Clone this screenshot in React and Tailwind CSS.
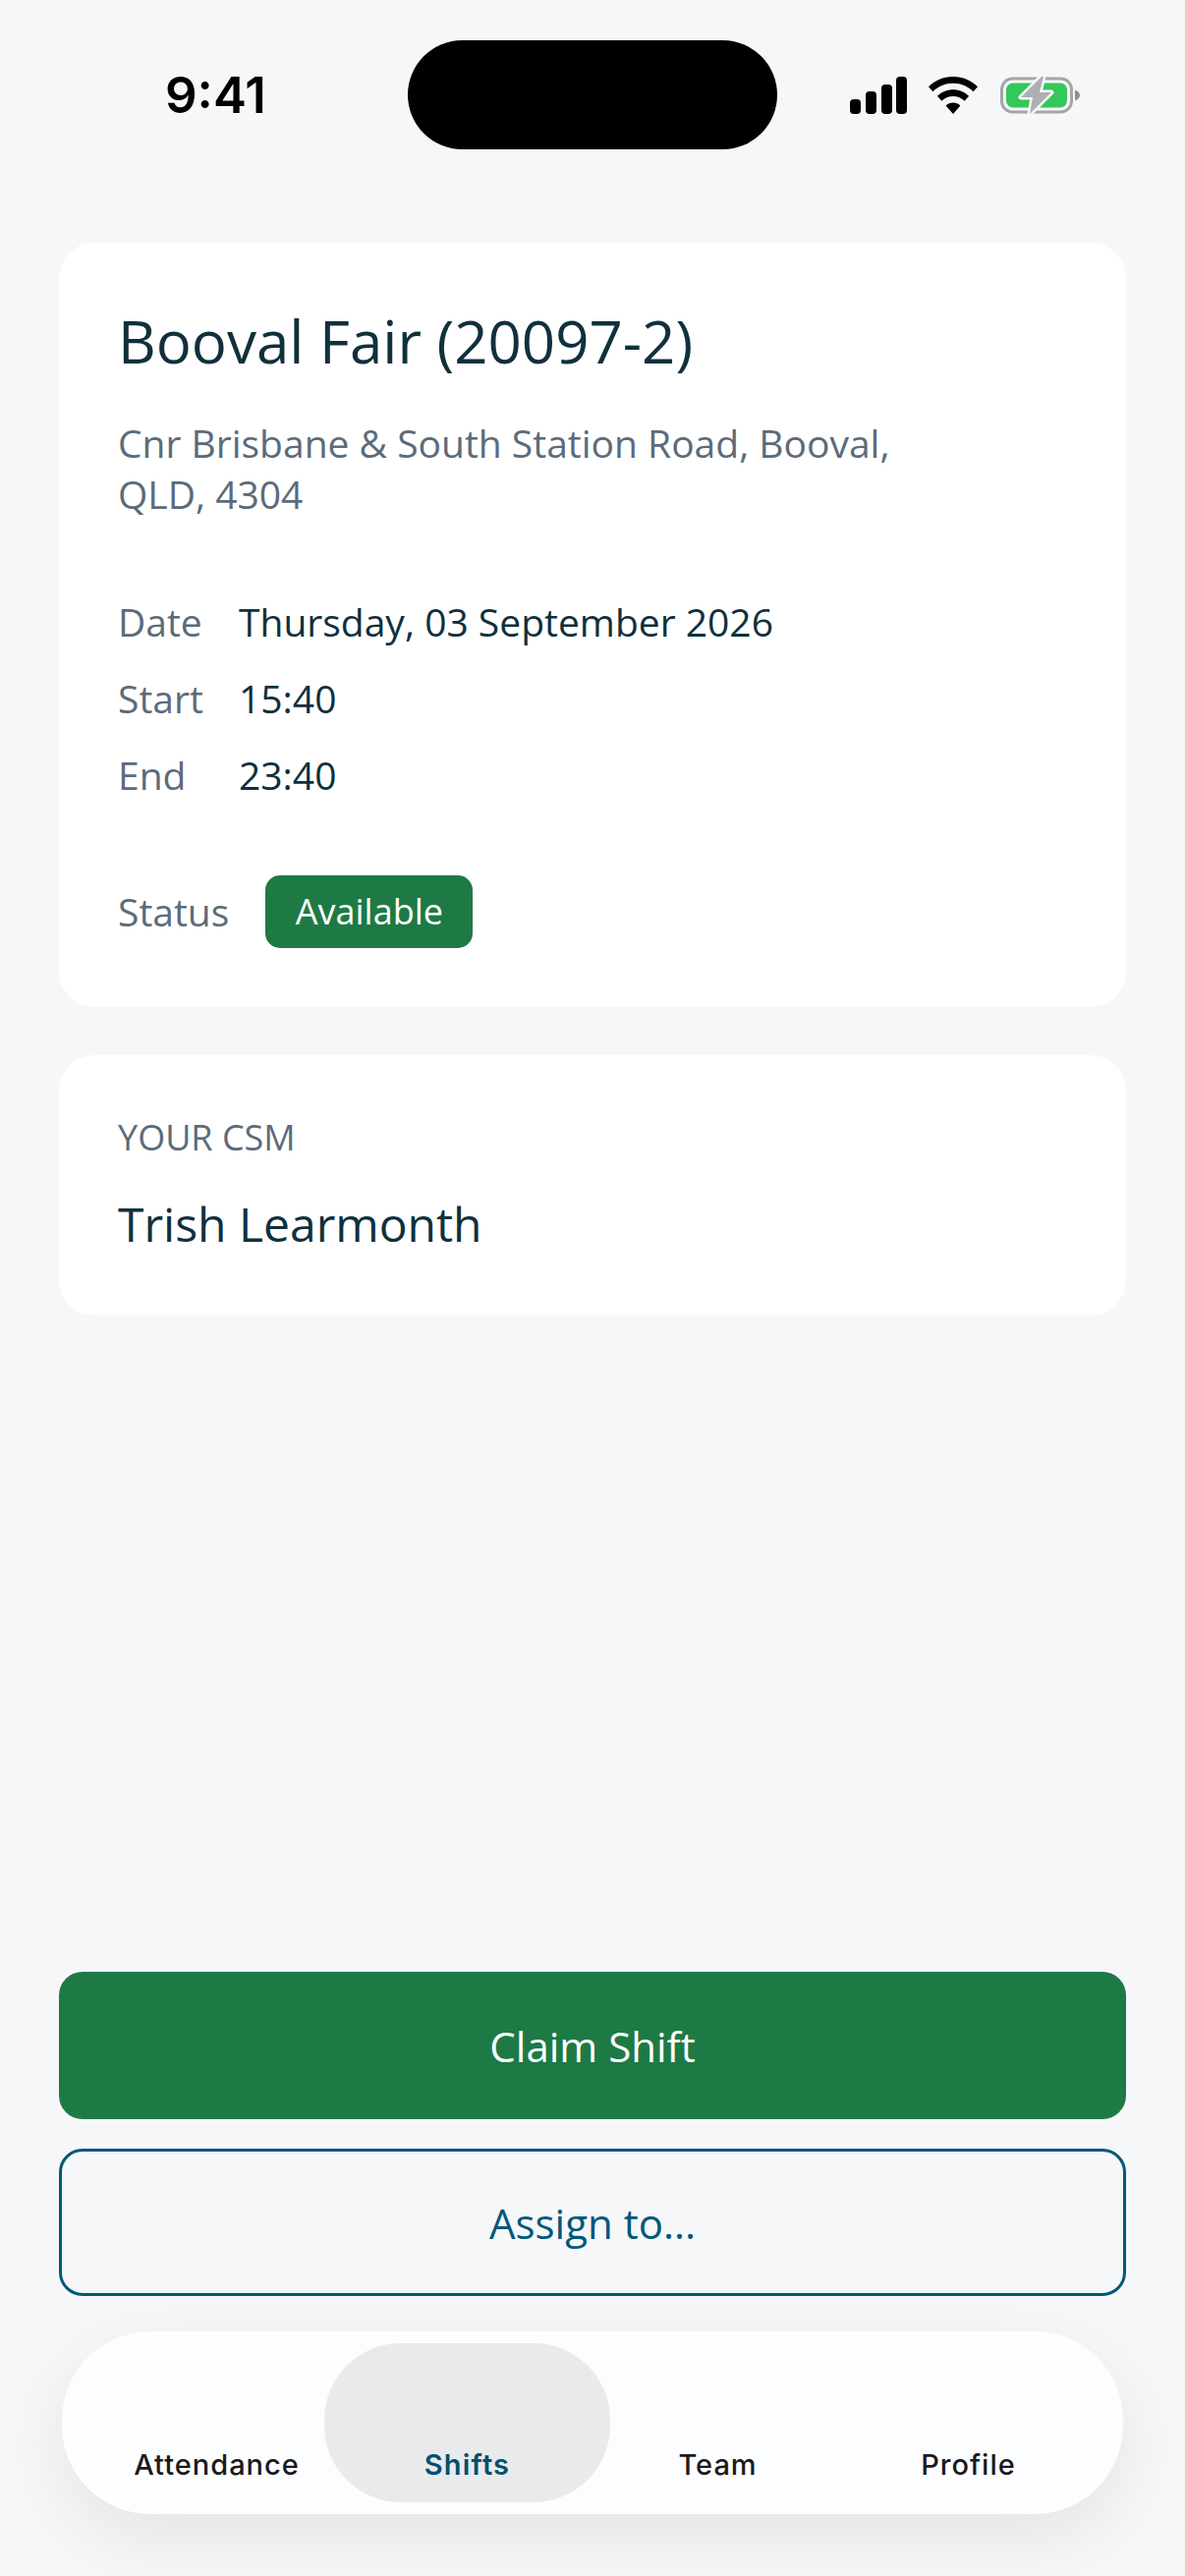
import React from "react";

const openSans = { fontFamily: '"Open Sans", sans-serif' };

function StatusIcons() {
  return (
    <div className="flex items-center">
      <svg width="58" height="38" viewBox="0 0 58 38" fill="#000">
        <rect x="0" y="23" width="11" height="15" rx="4" />
        <rect x="16" y="15" width="11" height="23" rx="4" />
        <rect x="32" y="8" width="11" height="30" rx="4" />
        <rect x="47" y="0" width="11" height="38" rx="4" />
      </svg>
      <svg className="ml-[22px]" width="50" height="38" viewBox="0 0 50 38" fill="#000">
        <path d="M25 0C34.8 0 43.6 3.9 50 10.3L45.6 15.2C40.2 9.9 33 6.7 25 6.7S9.8 9.9 4.4 15.2L0 10.3C6.4 3.9 15.2 0 25 0Z" />
        <path d="M25 13.2C31.3 13.2 37 15.7 41.1 19.8L36.6 24.7C33.6 21.8 29.5 19.9 25 19.9S16.4 21.8 13.4 24.7L8.9 19.8C13 15.7 18.7 13.2 25 13.2Z" />
        <path d="M25 26.5C27.9 26.5 30.5 27.6 32.4 29.5L25 38L17.6 29.5C19.5 27.6 22.1 26.5 25 26.5Z" />
      </svg>
      <svg className="ml-[23px]" width="82" height="40" viewBox="0 0 82 40">
        <rect x="1.5" y="3" width="71" height="34" rx="11" fill="none" stroke="#a3a5a7" strokeWidth="3" />
        <rect x="6" y="7.5" width="62" height="25" rx="7" fill="#34c759" />
        <path d="M76 14.5C79 15.5 81 17.5 81 20S79 24.5 76 25.5Z" fill="#8e8f91" />
        <path
          d="M42 1L21 22H33L30 39L52 17H40L44 1Z"
          fill="#adafb0"
          stroke="#f6f7f9"
          strokeWidth="5"
          strokeLinejoin="round"
          paintOrder="stroke"
        />
      </svg>
    </div>
  );
}

function InfoRow({ label, value }) {
  return (
    <div className="flex items-center h-[78px]">
      <span className="w-[123px] text-[#5c6b7a]">{label}</span>
      <span className="text-[#10303c]">{value}</span>
    </div>
  );
}

function NavItem({ label, active }) {
  return (
    <div className="relative flex-1 h-full flex items-end justify-center pb-[21px]">
      <span
        className={`text-[29px] leading-[34px] ${active ? "font-semibold tracking-[1.2px] text-[#00506f]" : "font-medium tracking-[1px] text-[#1a1a1c]"}`}
        style={{ fontFamily: "Inter, sans-serif" }}
      >
        {label}
      </span>
    </div>
  );
}

export default function App() {
  return (
    <div className="w-[1206px] h-[2622px] bg-[#f6f7f9] flex flex-col overflow-hidden" style={openSans}>
      <div className="flex items-center h-[111px] mt-[41px] pl-[168px] pr-[106px]">
        <span
          className="w-[247px] text-[51px] font-semibold leading-none text-black"
          style={{ fontFamily: "Inter, sans-serif" }}
        >
          9:41
        </span>
        <div className="w-[376px] h-[111px] bg-black rounded-[56px]" />
        <div className="ml-auto">
          <StatusIcons />
        </div>
      </div>

      <div className="mx-[60px] mt-[95px] bg-white rounded-[36px] px-[60px] pt-[60px] h-[778px]">
        <h1 className="text-[60px] leading-[80px] text-[#10303c]">Booval Fair (20097-2)</h1>
        <p className="mt-[38px] text-[39px] leading-[52px] text-[#5c6b7a] max-w-[860px]">
          Cnr Brisbane &amp; South Station Road, Booval, QLD, 4304
        </p>
        <div className="mt-[65px] text-[39px]">
          <InfoRow label="Date" value="Thursday, 03 September 2026" />
          <InfoRow label="Start" value="15:40" />
          <InfoRow label="End" value="23:40" />
        </div>
        <div className="mt-[63px] flex items-center">
          <span className="text-[39px] text-[#5c6b7a]">Status</span>
          <span className="ml-[37px] h-[74px] w-[211px] flex items-center justify-center bg-[#1d7a45] rounded-[15px] text-[36px] text-white">
            Available
          </span>
        </div>
      </div>

      <div className="mx-[60px] mt-[49px] bg-white rounded-[36px] px-[60px] pt-[60px] h-[265px]">
        <div className="text-[36px] leading-[48px] text-[#5c6b7a]">YOUR CSM</div>
        <div className="mt-[31px] text-[48px] leading-[66px] text-[#10303c]">Trish Learmonth</div>
      </div>

      <div className="mt-auto mx-[60px] flex flex-col gap-[30px]">
        <button className="h-[150px] bg-[#1d7a45] rounded-[24px] text-[42px] text-white">Claim Shift</button>
        <button className="h-[150px] border-[3px] border-[#00587a] rounded-[24px] text-[42px] text-[#00587a]">
          Assign to...
        </button>
      </div>

      <div className="relative mx-[63px] mt-[36px] mb-[63px] h-[186px] bg-[#fcfdff] rounded-[90px] px-[30px] py-[12px] flex shadow-[0_24px_72px_rgba(0,0,0,0.08)]">
        <div className="absolute left-[267px] top-[12px] w-[291px] h-[162px] bg-[#e9eaec] rounded-[78px]" />
        <NavItem label="Attendance" />
        <NavItem label="Shifts" active />
        <NavItem label="Team" />
        <NavItem label="Profile" />
      </div>
    </div>
  );
}
